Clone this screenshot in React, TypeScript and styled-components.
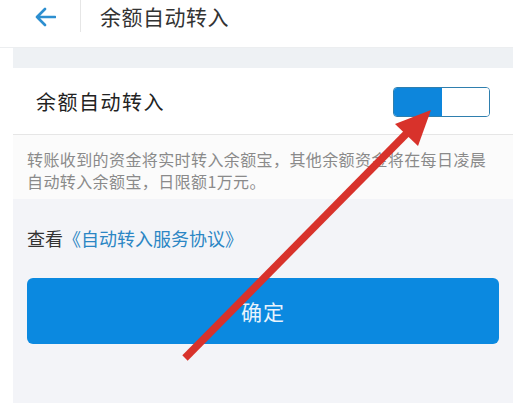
import styled, { createGlobalStyle } from 'styled-components';

const GlobalStyle = createGlobalStyle`
  *, *::before, *::after {
    box-sizing: border-box;
  }
  html, body {
    margin: 0;
    padding: 0;
    background: #ffffff;
    font-family: "Noto Sans CJK SC", "Noto Sans", sans-serif;
  }
`;

const Page = styled.div`
  position: relative;
  display: flex;
  flex-direction: column;
  width: 513px;
  height: 403px;
  overflow: hidden;
  background: #ffffff;
`;

const Header = styled.header`
  display: flex;
  align-items: center;
  height: 48px;
  padding: 0 0 14px 34px;
  background: #ffffff;
  border-bottom: 1px solid #eceef0;
`;

const BackButton = styled.div`
  display: flex;
  align-items: center;
  width: 26px;
  color: #2d8fd0;
`;

const HeaderDivider = styled.div`
  align-self: flex-start;
  width: 1px;
  height: 32px;
  margin: 0 19px 0 20px;
  background: #e6e6e6;
`;

const HeaderTitle = styled.h1`
  margin: -2px 0 0;
  font-size: 21px;
  font-weight: 400;
  color: #333333;
  letter-spacing: 0.5px;
`;

const Body = styled.main`
  flex: 1;
  display: flex;
  flex-direction: column;
  margin-left: 13px;
`;

const Gap = styled.div`
  height: 20px;
  background: #eef1f4;
`;

const SettingRow = styled.div`
  display: flex;
  align-items: center;
  justify-content: space-between;
  height: 67px;
  padding: 0 23px;
  background: #ffffff;
  border-bottom: 1px solid #e6e6e6;
`;

const RowLabel = styled.span`
  font-size: 20px;
  color: #222222;
  letter-spacing: 1.5px;
`;

const Toggle = styled.div`
  display: flex;
  width: 97px;
  height: 30px;
  margin-top: 2px;
  border-radius: 4px;
  overflow: hidden;
  border: 1.5px solid #2f7fae;
`;

const ToggleHalf = styled.div<{ $on?: boolean }>`
  flex: 1;
  background: ${(p) => (p.$on ? '#0d86dc' : '#ffffff')};
`;

const Note = styled.p`
  margin: 0;
  height: 64px;
  padding: 13px 10px 0 14px;
  background: #fbfbfb;
  font-size: 16px;
  line-height: 22px;
  color: #8a8a8a;
  letter-spacing: 0.4px;
`;

const Lower = styled.section`
  flex: 1;
  display: flex;
  flex-direction: column;
  gap: 27px;
  padding: 26px 14px 0;
  background: #f3f4f8;
`;

const Agreement = styled.div`
  font-size: 18px;
  color: #333333;
`;

const Link = styled.span`
  color: #2b86c4;
`;

const ConfirmButton = styled.button`
  height: 66px;
  border: none;
  border-radius: 6px;
  background: #0b89e0;
  color: #e8f3fc;
  font-family: inherit;
  font-size: 21px;
  letter-spacing: 1px;
`;

const Arrow = styled.svg`
  position: absolute;
  left: 0;
  top: 0;
  pointer-events: none;
`;

export default function App() {
  return (
    <Page>
      <GlobalStyle />
      <Header>
        <BackButton>
          <svg width="22" height="20" viewBox="0 0 22 20" fill="none">
            <path d="M21 10H3M11 2L3 10L11 18" stroke="currentColor" strokeWidth="2.6" strokeLinecap="round" strokeLinejoin="round" />
          </svg>
        </BackButton>
        <HeaderDivider />
        <HeaderTitle>余额自动转入</HeaderTitle>
      </Header>
      <Body>
        <Gap />
        <SettingRow>
          <RowLabel>余额自动转入</RowLabel>
          <Toggle>
            <ToggleHalf $on />
            <ToggleHalf />
          </Toggle>
        </SettingRow>
        <Note>
          转账收到的资金将实时转入余额宝，其他余额资金将在每日凌晨
          <br />
          自动转入余额宝，日限额1万元。
        </Note>
        <Lower>
          <Agreement>
            查看<Link>《自动转入服务协议》</Link>
          </Agreement>
          <ConfirmButton>确定</ConfirmButton>
        </Lower>
      </Body>
      <Arrow width="513" height="403" viewBox="0 0 513 403">
        <line x1="185" y1="358" x2="412" y2="128" stroke="#d8322b" strokeWidth="7.5" />
        <polygon points="431,110 395,124 418,146" fill="#d8322b" />
      </Arrow>
    </Page>
  );
}
